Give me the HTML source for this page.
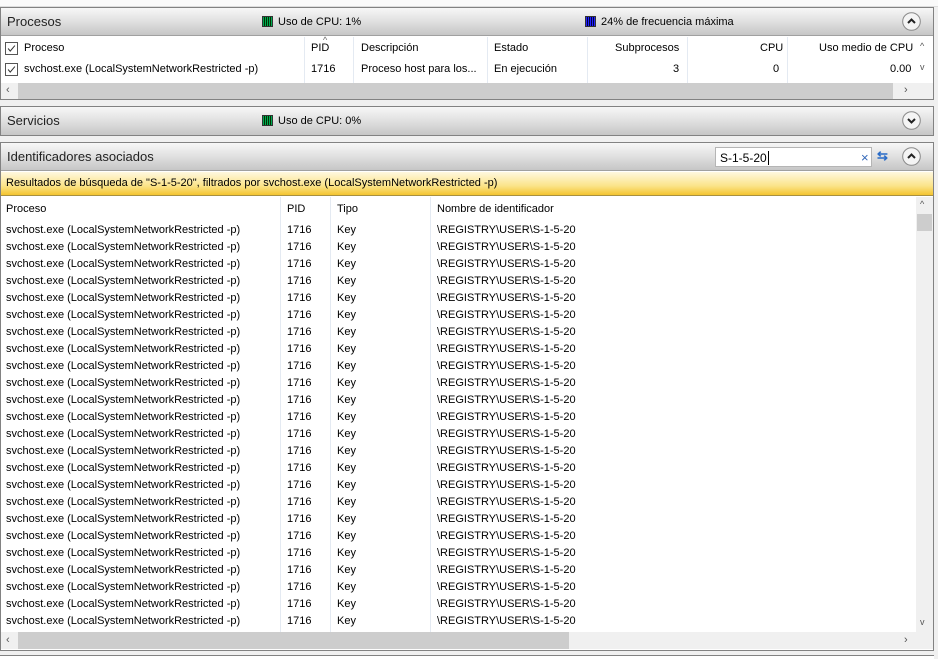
<!DOCTYPE html>
<html><head><meta charset="utf-8"><style>
*{margin:0;padding:0;box-sizing:border-box}
body{width:938px;height:659px;background:#f0f0f0;font-family:"Liberation Sans",sans-serif;font-size:11px;color:#000;position:relative;overflow:hidden}
.a{position:absolute;white-space:nowrap}
.panel{position:absolute;left:0;width:934px;border:1px solid #828282;background:#fff}
.hdr{position:absolute;left:0;right:0;height:28px;background:linear-gradient(#f7f7f7,#e0e0e0 50%,#c6c6c6);border-bottom:1px solid #a0a0a0}
.hdr .t{position:absolute;left:6px;top:6px;font-size:13px;color:#222}
.circ{position:absolute;width:19px;height:19px}
.sq{position:absolute;width:11px;height:11px;border:1px solid #333}
.vl{position:absolute;width:1px;background:#e4eaf2}
.cb{position:absolute;width:13px;height:13px;border:1px solid #555;background:#fff}
</style></head><body>
<div class="a" style="left:0;top:0;width:938px;height:7px;background:#fafafa;border-bottom:1px solid #ddd"></div>
<!-- Procesos -->
<div class="panel" style="top:7px;height:93px">
 <div class="hdr" style="top:0"><span class="t">Procesos</span>
  <div class="sq" style="left:261px;top:8px;background:repeating-linear-gradient(90deg,#0a5 0 1px,#030 1px 2px)"></div>
  <span class="a" style="left:277px;top:8px">Uso de CPU: 1%</span>
  <div class="sq" style="left:584px;top:8px;background:repeating-linear-gradient(90deg,#22f 0 1px,#004 1px 2px)"></div>
  <span class="a" style="left:600px;top:8px">24% de frecuencia máxima</span>
  <svg class="circ" style="left:901px;top:4px" viewBox="0 0 19 19"><circle cx="9.5" cy="9.5" r="8.8" fill="#f4f4f4" stroke="#8a8a8a"/><path d="M6 11 L9.5 7.5 L13 11" fill="none" stroke="#222" stroke-width="2"/></svg>
 </div>
 <div class="a" style="left:0;top:29px;width:916px;height:46px;background:#fff">
  <svg class="cb" style="left:4px;top:5px" viewBox="0 0 13 13"><path d="M2.5 6.5 L5 9.5 L10.5 3" fill="none" stroke="#333" stroke-width="1.2"/></svg><span class="a" style="left:23px;top:5px">Proceso</span>
  <svg class="cb" style="left:4px;top:26px" viewBox="0 0 13 13"><path d="M2.5 6.5 L5 9.5 L10.5 3" fill="none" stroke="#333" stroke-width="1.2"/></svg><span class="a" style="left:23px;top:26px">svchost.exe (LocalSystemNetworkRestricted -p)</span>
  <div class="vl" style="left:303px;top:0;height:46px"></div>
  <span class="a" style="left:322px;top:-2px;font-size:9px;color:#666">^</span>
  <span class="a" style="left:310px;top:5px">PID</span><span class="a" style="left:310px;top:26px">1716</span>
  <div class="vl" style="left:352px;top:0;height:46px"></div>
  <span class="a" style="left:360px;top:5px">Descripción</span><span class="a" style="left:360px;top:26px">Proceso host para los...</span>
  <div class="vl" style="left:486px;top:0;height:46px"></div>
  <span class="a" style="left:493px;top:5px">Estado</span><span class="a" style="left:493px;top:26px">En ejecución</span>
  <div class="vl" style="left:586px;top:0;height:46px"></div>
  <span class="a" style="left:614px;top:5px">Subprocesos</span><span class="a" style="left:672px;top:26px">3</span>
  <div class="vl" style="left:686px;top:0;height:46px"></div>
  <span class="a" style="left:759px;top:5px">CPU</span><span class="a" style="left:772px;top:26px">0</span>
  <div class="vl" style="left:786px;top:0;height:46px"></div>
  <span class="a" style="left:818px;top:5px">Uso medio de CPU</span><span class="a" style="left:889px;top:26px">0.00</span>
 </div>
 <span class="a" style="left:919px;top:33px;font-size:9px;color:#555">^</span>
 <span class="a" style="left:919px;top:54px;font-size:9px;color:#555">v</span>
 <div class="a" style="left:0;top:75px;width:932px;height:16px;background:#f0f0f0">
  <div class="a" style="left:17px;top:0;width:875px;height:16px;background:#cdcdcd"></div>
  <span class="a" style="left:5px;top:1px;color:#555">‹</span><span class="a" style="left:903px;top:1px;color:#555">›</span>
 </div>
</div>
<!-- Servicios -->
<div class="panel" style="top:106px;height:30px">
 <div class="hdr" style="top:0;border-bottom:none;height:28px"><span class="t">Servicios</span>
  <div class="sq" style="left:261px;top:8px;background:repeating-linear-gradient(90deg,#0a5 0 1px,#030 1px 2px)"></div>
  <span class="a" style="left:277px;top:8px">Uso de CPU: 0%</span>
  <svg class="circ" style="left:901px;top:4px" viewBox="0 0 19 19"><circle cx="9.5" cy="9.5" r="8.8" fill="#f4f4f4" stroke="#8a8a8a"/><path d="M6 8 L9.5 11.5 L13 8" fill="none" stroke="#222" stroke-width="2"/></svg>
 </div>
</div>
<!-- Identificadores -->
<div class="panel" style="top:142px;height:509px">
 <div class="hdr" style="top:0"><span class="t">Identificadores asociados</span>
  <div class="a" style="left:714px;top:4px;width:157px;height:20px;background:#fff;border:1px solid #b5b5b5">
   <span class="a" style="left:4px;top:3px;font-size:12px">S-1-5-20<span style="border-left:1px solid #000;margin-left:1px"></span></span>
   <span class="a" style="left:145px;top:2px;color:#3367b8;font-size:13px">×</span>
  </div>
  <span class="a" style="left:876px;top:5px;color:#2a6cc8;font-size:13px;font-weight:bold">⇆</span>
  <svg class="circ" style="left:901px;top:4px" viewBox="0 0 19 19"><circle cx="9.5" cy="9.5" r="8.8" fill="#f4f4f4" stroke="#8a8a8a"/><path d="M6 11 L9.5 7.5 L13 11" fill="none" stroke="#222" stroke-width="2"/></svg>
 </div>
 <div class="a" style="left:0;top:29px;width:932px;height:24px;background:linear-gradient(#fff8df,#fbe48a 60%,#f4c430);border-bottom:1px solid #a89040">
  <span class="a" style="left:5px;top:5px">Resultados de búsqueda de "S-1-5-20", filtrados por svchost.exe (LocalSystemNetworkRestricted -p)</span>
 </div>
 <div class="a" style="left:0;top:54px;width:915px;height:435px;background:#fff" id="list">
  <div class="vl" style="left:279px;top:0;height:435px"></div>
  <div class="vl" style="left:329px;top:0;height:435px"></div>
  <div class="vl" style="left:429px;top:0;height:435px"></div>
  <span class="a" style="left:5px;top:6px">Proceso</span>
  <span class="a" style="left:286px;top:6px">PID</span>
  <span class="a" style="left:336px;top:6px">Tipo</span>
  <span class="a" style="left:436px;top:6px">Nombre de identificador</span>
  <div id="rows"></div>
 </div>
 <div class="a" style="left:915px;top:54px;width:17px;height:435px;background:#f0f0f0">
  <span class="a" style="left:4px;top:2px;font-size:9px;color:#555">^</span>
  <div class="a" style="left:1px;top:17px;width:15px;height:17px;background:#cdcdcd"></div>
  <span class="a" style="left:4px;top:420px;font-size:9px;color:#555">v</span>
 </div>
 <div class="a" style="left:0;top:489px;width:932px;height:17px;background:#f0f0f0">
  <div class="a" style="left:17px;top:0;width:551px;height:17px;background:#cdcdcd"></div>
  <span class="a" style="left:5px;top:2px;color:#555">‹</span><span class="a" style="left:903px;top:2px;color:#555">›</span>
 </div>
</div>
<div class="a" style="left:0;top:655px;width:934px;height:4px;border-top:1px solid #828282;background:#fff"></div>
<script>
var h='';for(var i=0;i<24;i++){var y=27+i*17;
h+='<span class="a" style="left:5px;top:'+y+'px">svchost.exe (LocalSystemNetworkRestricted -p)</span><span class="a" style="left:286px;top:'+y+'px">1716</span><span class="a" style="left:336px;top:'+y+'px">Key</span><span class="a" style="left:436px;top:'+y+'px">\\REGISTRY\\USER\\S-1-5-20</span>';}
document.getElementById('rows').innerHTML=h;
</script>
</body></html>
